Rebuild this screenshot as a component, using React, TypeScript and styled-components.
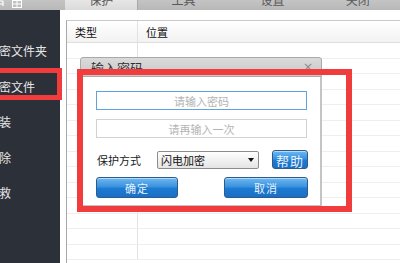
import styled, { createGlobalStyle } from "styled-components";

const GlobalStyle = createGlobalStyle`
  html, body {
    margin: 0;
    padding: 0;
    background: #ffffff;
  }
  * {
    box-sizing: border-box;
  }
`;

const Screen = styled.div`
  position: relative;
  width: 400px;
  height: 263px;
  overflow: hidden;
  display: flex;
  flex-direction: column;
  font-family: "Noto Sans CJK SC", "Liberation Sans", sans-serif;
  background: #ffffff;
`;

const TabBar = styled.div`
  display: flex;
  height: 10px;
  flex-shrink: 0;
  background: linear-gradient(#c4c4c4, #b8b8b8);
  overflow: hidden;
`;

const IconSlot = styled.div`
  width: 67px;
  display: flex;
  align-items: flex-start;
  gap: 6px;
`;

const Tab = styled.div<{ $active?: boolean; $width: number }>`
  width: ${p => p.$width}px;
  display: flex;
  justify-content: center;
  align-items: flex-end;
  background: ${p => (p.$active ? "linear-gradient(#e6e6e6, #dadada)" : "transparent")};
  border-right: 1px solid ${p => (p.$active ? "#a9a9a9" : "transparent")};
  color: #5a5a5a;
  font-size: 12px;
  line-height: 12px;

  span {
    margin-bottom: 4px;
  }
`;

const Body = styled.div`
  flex: 1;
  display: flex;
  min-height: 0;
`;

const Sidebar = styled.div`
  width: 60px;
  flex-shrink: 0;
  background: #2c3038;
  display: flex;
  flex-direction: column;
  padding-top: 23px;
`;

const SideItem = styled.div`
  height: 35.5px;
  display: flex;
  align-items: center;
  margin-left: -1px;
  color: #e6e6e6;
  font-size: 12px;
  white-space: nowrap;
`;

const Main = styled.div`
  flex: 1;
  padding: 10px 0 0 6px;
  background: #ffffff;
`;

const Table = styled.div`
  height: 100%;
  border-left: 1px solid #a8a8ac;
  border-top: 1px solid #c9c9c9;
  display: flex;
  flex-direction: column;
`;

const HeaderRow = styled.div`
  display: flex;
  height: 22px;
  flex-shrink: 0;
  background: linear-gradient(#ffffff, #f2f2f2);
  border-bottom: 1px solid #dedede;
  font-size: 11px;
  color: #111;
`;

const Cell = styled.div<{ $w?: number }>`
  ${p => (p.$w ? `width: ${p.$w}px;` : "flex: 1;")}
  display: flex;
  align-items: center;
  padding-left: 8px;
  border-right: 1px solid ${p => (p.$w ? "#e2e2e2" : "transparent")};
`;

const Row = styled.div`
  display: flex;
  height: 15.5px;
  flex-shrink: 0;
  border-bottom: 1px solid #eeeeee;
`;

const Dialog = styled.div`
  position: absolute;
  left: 80px;
  top: 57px;
  width: 242px;
  height: 150px;
  display: flex;
  flex-direction: column;
`;

const DialogTitle = styled.div`
  height: 20px;
  display: flex;
  align-items: center;
  justify-content: space-between;
  padding: 0 8px 0 10px;
  background: linear-gradient(#dadada, #c8c8c8);
  border: 1px solid #a9a9a9;
  border-radius: 3px 3px 0 0;
  color: #333;
  font-size: 13px;
`;

const CloseMark = styled.span`
  color: #8a8a8a;
  font-size: 12px;
  font-family: "DejaVu Sans", sans-serif;
`;

const DialogBody = styled.div`
  flex: 1;
  background: #ffffff;
  border-left: 2px solid #c4c4c4;
  border-right: 2px solid #c4c4c4;
  border-bottom: 2px solid #c4c4c4;
  padding: 14px 13px 0 14px;
  display: flex;
  flex-direction: column;
  gap: 9px;
`;

const PwdInput = styled.input<{ $focus?: boolean }>`
  width: 211px;
  height: 19px;
  border: 1px solid ${p => (p.$focus ? "#5fa2dd" : "#d2d2d2")};
  outline: none;
  text-align: center;
  font-family: inherit;
  font-size: 11px;
  padding: 0;

  &::placeholder {
    color: #b4b4b4;
  }
`;

const OptionRow = styled.div`
  display: flex;
  align-items: center;
  width: 212px;
  margin-top: 3px;
  height: 19px;
`;

const Label = styled.span`
  width: 61px;
  padding-left: 1px;
  font-size: 11px;
  color: #1a1a1a;
`;

const Select = styled.div`
  width: 102px;
  height: 18px;
  display: flex;
  align-items: center;
  justify-content: space-between;
  padding: 0 4px 0 3px;
  border: 1px solid #8c8c8c;
  border-radius: 2px;
  background: linear-gradient(#ffffff, #e4e4e4);
  font-size: 11px;
  color: #111;
`;

const Arrow = styled.span`
  width: 0;
  height: 0;
  border-left: 3.5px solid transparent;
  border-right: 3.5px solid transparent;
  border-top: 4px solid #111;
`;

const BlueButton = styled.button<{ $w: number; $h: number; $fs: number }>`
  width: ${p => p.$w}px;
  height: ${p => p.$h}px;
  padding: 0;
  border: 1px solid #2b5c8c;
  border-radius: 3px;
  background: linear-gradient(#6fb8f0 0%, #3a93e0 45%, #1f7ad2 55%, #1a6fc4 100%);
  box-shadow: inset 0 1px 0 rgba(255, 255, 255, 0.5);
  color: #e8f2fc;
  font-family: inherit;
  font-size: ${p => p.$fs}px;
  letter-spacing: 1px;
`;

const ButtonRow = styled.div`
  display: flex;
  justify-content: space-between;
  width: 212px;
  margin-top: -1px;
`;

const Spacer = styled.div`
  flex: 1;
`;

const RedFrame = styled.div<{ $l: number; $t: number; $w: number; $h: number; $b: number }>`
  position: absolute;
  left: ${p => p.$l}px;
  top: ${p => p.$t}px;
  width: ${p => p.$w}px;
  height: ${p => p.$h}px;
  border: ${p => p.$b}px solid #f03c3c;
  pointer-events: none;
`;

const sideItems = ["密文件夹", "密文件", "装", "除", "救"];

const rows = Array.from({ length: 14 }, (_, i) => i);

export default function App() {
  return (
    <Screen>
      <GlobalStyle />
      <TabBar>
        <IconSlot>
          <svg width="6" height="10" viewBox="0 0 6 10">
            <path d="M0 1 H3 M3 1 V6 M0 4 H3" stroke="#ffffff" strokeWidth="1.2" fill="none" />
          </svg>
          <svg width="10" height="10" viewBox="0 0 10 10">
            <rect x="0.5" y="0.5" width="9" height="7" fill="none" stroke="#ffffff" strokeWidth="1" />
            <path d="M0.5 4 H9.5 M5 0.5 V7.5" stroke="#ffffff" strokeWidth="1" />
          </svg>
        </IconSlot>
        <Tab $active $width={76}>
          <span>保护</span>
        </Tab>
        <Tab $width={94}>
          <span>工具</span>
        </Tab>
        <Tab $width={90}>
          <span>设置</span>
        </Tab>
        <Tab $width={86}>
          <span>关闭</span>
        </Tab>
      </TabBar>
      <Body>
        <Sidebar>
          {sideItems.map(label => (
            <SideItem key={label}>{label}</SideItem>
          ))}
        </Sidebar>
        <Main>
          <Table>
            <HeaderRow>
              <Cell $w={71}>类型</Cell>
              <Cell>位置</Cell>
            </HeaderRow>
            {rows.map(r => (
              <Row key={r}>
                <Cell $w={71} />
                <Cell />
              </Row>
            ))}
          </Table>
        </Main>
      </Body>

      <Dialog>
        <DialogTitle>
          <span>输入密码</span>
          <CloseMark>×</CloseMark>
        </DialogTitle>
        <DialogBody>
          <PwdInput $focus type="password" placeholder="请输入密码" />
          <PwdInput type="password" placeholder="请再输入一次" />
          <OptionRow>
            <Label>保护方式</Label>
            <Select>
              <span>闪电加密</span>
              <Arrow />
            </Select>
            <Spacer />
            <BlueButton $w={36} $h={19} $fs={13}>
              帮助
            </BlueButton>
          </OptionRow>
          <ButtonRow>
            <BlueButton $w={82} $h={21} $fs={11}>
              确定
            </BlueButton>
            <BlueButton $w={84} $h={21} $fs={11}>
              取消
            </BlueButton>
          </ButtonRow>
        </DialogBody>
      </Dialog>

      <RedFrame $l={-6} $t={68} $w={68} $h={32} $b={5} />
      <RedFrame $l={77} $t={69} $w={275} $h={143} $b={6} />
    </Screen>
  );
}
